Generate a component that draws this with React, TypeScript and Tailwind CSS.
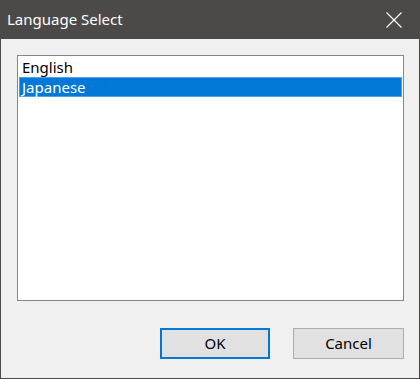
import React, { useState } from 'react';

const languages = ['English', 'Japanese'];

export default function App() {
  const [selected, setSelected] = useState(1);

  return (
    <div className="w-[420px] h-[379px] flex flex-col bg-[#4b4a48] px-px pb-px font-['Segoe_UI','Noto_Sans',sans-serif] select-none">
      {/* Title bar */}
      <div className="h-[39px] shrink-0 flex items-center justify-between pl-[6px] pr-[17px] text-white">
        <span className="text-[15px] leading-none">Language Select</span>
        <svg width="16" height="16" viewBox="0 0 16 16" className="block">
          <path d="M0.5 0.5 L15.5 15.5 M15.5 0.5 L0.5 15.5" stroke="#ffffff" strokeWidth="1.1" fill="none" />
        </svg>
      </div>

      {/* Body */}
      <div className="flex-1 flex flex-col bg-[#f0f0f0] pl-[16px] pr-[15px] pt-[16px]">
        <div className="h-[246px] w-[387px] border border-[#828790] bg-white p-px">
          {languages.map((lang, i) => (
            <div
              key={lang}
              onClick={() => setSelected(i)}
              className={
                i === selected
                  ? 'h-[20px] flex items-center pl-[2px] text-[15px] leading-none bg-[#0078d7] text-white border border-[#4ea1e6]'
                  : 'h-[20px] flex items-center pl-[3px] text-[15px] leading-none text-black'
              }
            >
              {lang}
            </div>
          ))}
        </div>

        <div className="flex justify-end gap-[23px] mt-[27px]">
          <button className="w-[110px] h-[31px] bg-[#e1e1e1] border-2 border-[#0078d7] text-[15px] text-black">
            OK
          </button>
          <button className="w-[111px] h-[31px] bg-[#e1e1e1] border border-[#adadad] text-[15px] text-black">
            Cancel
          </button>
        </div>
      </div>
    </div>
  );
}
